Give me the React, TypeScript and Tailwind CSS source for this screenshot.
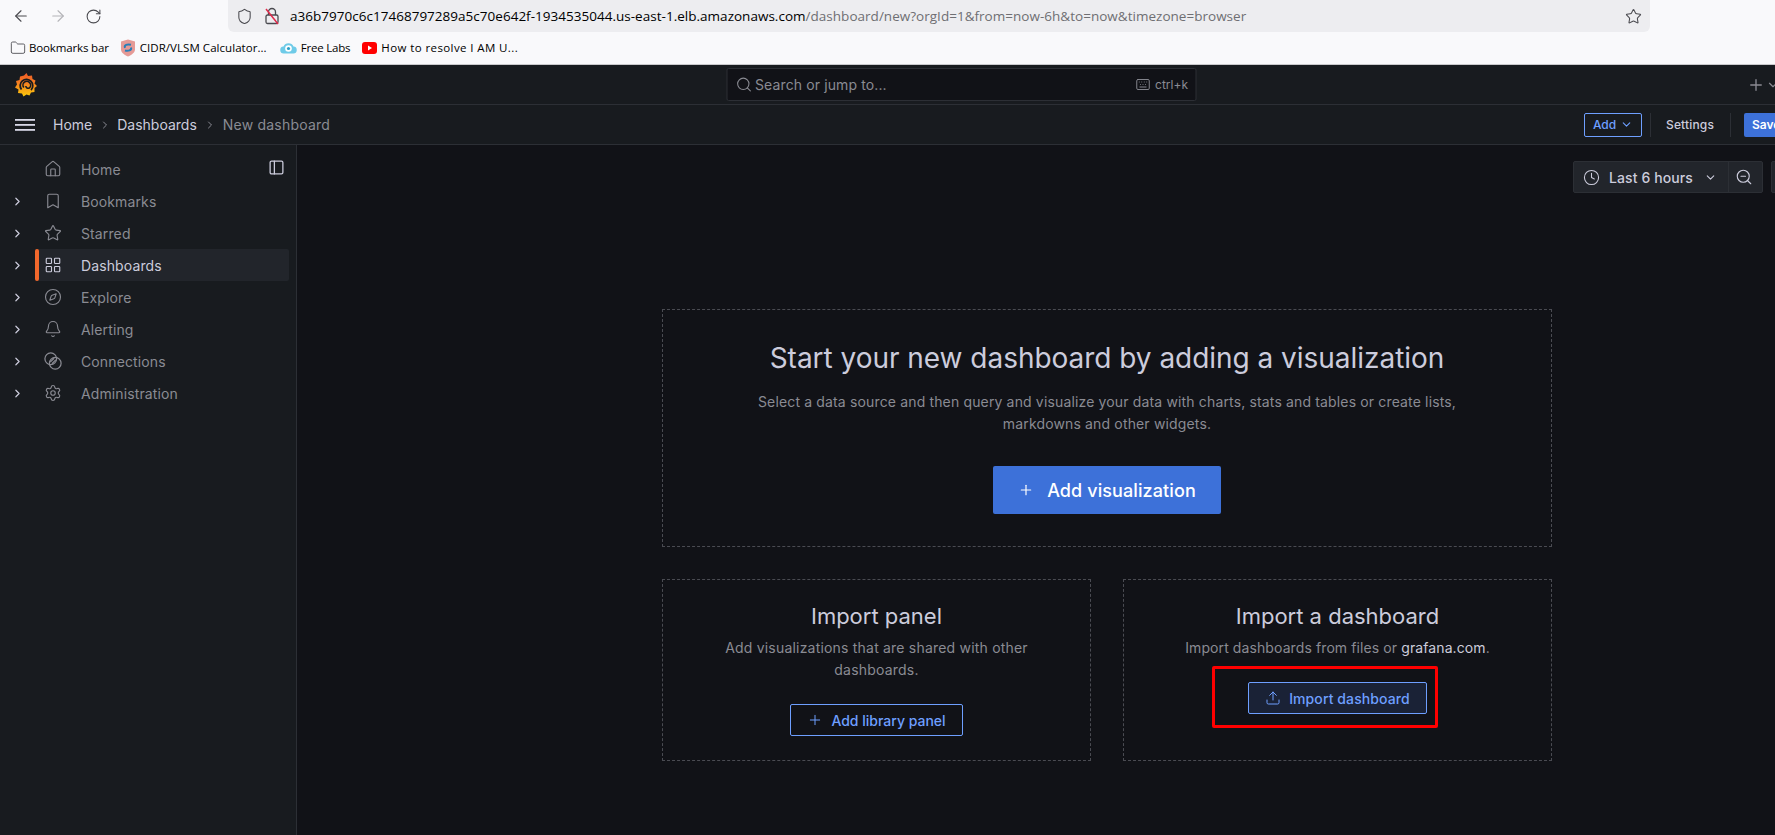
import React from "react";
import { ArrowLeft, ArrowRight, RotateCw, Shield, Star, Folder, Search, Keyboard, Plus, ChevronDown, ChevronRight, Home, Bookmark, LayoutGrid, Compass, Bell, Settings, PanelLeft, Clock, ZoomOut, Upload } from "lucide-react";

function GrafanaLogo() {
  return (
    <svg width="22" height="25" viewBox="0 0 22 25">
      <defs>
        <linearGradient id="g" x1="0" y1="1" x2="0" y2="0">
          <stop offset="0" stopColor="#fbca0a" />
          <stop offset="0.55" stopColor="#f58220" />
          <stop offset="1" stopColor="#ef5a28" />
        </linearGradient>
      </defs>
      <path d="M9 2.500L11.500 0l1.500 3 4-.5.500 3.500 3 1.500-1 3 2.500 2.500-2.500 2 0 4-3.500.5-1.500 3-3-1-3 2-1.500-3-4-.5.500-3.500L0 14.500l2-3-1-3.500 3.500-1 .5-3.500z" fill="url(#g)" />
      <path d="M6.500 16.500A6.300 6.300 0 1 1 16 17" fill="none" stroke="#181b1f" strokeWidth="1.800" />
      <path d="M8.800 14.500a3.800 3.800 0 1 1 5.500.500 2.400 2.400 0 0 1-3.500-2" fill="none" stroke="#181b1f" strokeWidth="1.600" />
    </svg>
  );
}

function LinkIcon(p: { size?: number; strokeWidth?: number; className?: string }) {
  return (
    <svg width={p.size} height={p.size} viewBox="0 0 16 16" fill="none" stroke="currentColor" strokeWidth="1.100" className={p.className}>
      <circle cx="6" cy="6" r="5.200" />
      <circle cx="10" cy="10" r="5.200" />
      <path d="M5.500 9l3.500-3.500M7 10.500l3.500-3.500" />
    </svg>
  );
}

const nav: [string, React.ElementType, boolean, boolean][] = [
  ["Home", Home, false, false],
  ["Bookmarks", Bookmark, true, false],
  ["Starred", Star, true, false],
  ["Dashboards", LayoutGrid, true, true],
  ["Explore", Compass, true, false],
  ["Alerting", Bell, true, false],
  ["Connections", LinkIcon, true, false],
  ["Administration", Settings, true, false],
];

function Divider() {
  return <div className="h-[24px] w-px bg-[#2c2f35]" />;
}

export default function App() {
  return (
    <div className="flex h-[835px] w-[1775px] flex-col overflow-hidden bg-[#111217] font-['Inter',sans-serif] text-[#ccccdc]">
      <header className="flex h-[65px] shrink-0 flex-col border-b border-[#c9c9cc] bg-[#f9f9fb] font-['Open_Sans',sans-serif] text-black">
        <div className="flex h-[32px] items-center">
          <div className="flex w-[228px] items-center pl-[12px]">
            <ArrowLeft size={18} strokeWidth={1.500} className="text-[#4a4a4f]" />
            <ArrowRight size={18} strokeWidth={1.500} className="ml-[19px] text-[#b4b4b8]" />
            <RotateCw size={17} strokeWidth={1.500} className="ml-[18px] text-[#4a4a4f]" />
          </div>
          <div className="flex h-[32px] w-[1422px] items-center rounded-b-md bg-[#ededf0] pl-[8px] pr-[8px] text-[13.500px]">
            <Shield size={17} strokeWidth={1.500} className="text-[#4a4a4f]" />
            <svg width="16" height="18" viewBox="0 0 16 18" fill="none" className="ml-[11px]">
              <rect x="2" y="8" width="12" height="8.500" rx="1.500" stroke="#4a4a4f" strokeWidth="1.300" />
              <path d="M4.500 8V5a3.500 3.500 0 0 1 7 0v3" stroke="#4a4a4f" strokeWidth="1.300" />
              <path d="M2 2l12 15" stroke="#e0294a" strokeWidth="1.500" />
            </svg>
            <span className="ml-[10px] whitespace-nowrap tracking-[0.02px]">
              a36b7970c6c17468797289a5c70e642f-1934535044.us-east-1.elb.amazonaws.com
              <span className="text-[#6f6f73]">/dashboard/new?orgId=1&amp;from=now-6h&amp;to=now&amp;timezone=browser</span>
            </span>
            <Star size={17} strokeWidth={1.500} className="ml-auto text-[#4a4a4f]" />
          </div>
        </div>
        <div className="flex h-[32px] items-center pl-[10px] text-[11.500px]">
          <Folder size={16} strokeWidth={1.400} className="text-[#55555a]" />
          <span className="ml-[3px] tracking-[-0.15px]">Bookmarks bar</span>
          <svg width="16" height="18" viewBox="0 0 16 18" className="ml-[11px]">
            <path d="M1 2.500L8 .5l7 2v8c0 3-3.500 5.500-7 7-3.500-1.500-7-4-7-7z" fill="#e59a96" />
            <path d="M5 8.800C4 6 7 5 11 5.800M11 8.500c1 3-3 3.800-6 3" fill="none" stroke="#2a7fb8" strokeWidth="2" />
          </svg>
          <span className="ml-[4px] tracking-[0.05px]">CIDR/VLSM Calculator...</span>
          <svg width="17" height="12" viewBox="0 0 17 12" className="ml-[13px]">
            <path d="M4 11.500a3.500 3.500 0 0 1-.5-7 5.500 5.500 0 0 1 10 0 3.500 3.500 0 0 1-.5 7z" fill="#6fcbe8" />
            <circle cx="8.500" cy="6.500" r="3.300" fill="#fff" />
            <circle cx="8.500" cy="6.500" r="1.600" fill="#2aa0c8" />
          </svg>
          <span className="ml-[4px] tracking-[-0.2px]">Free Labs</span>
          <svg width="15" height="12" viewBox="0 0 15 12" className="ml-[12px]">
            <rect width="15" height="12" rx="3" fill="#f00" />
            <path d="M6 3.500l4 2.500-4 2.500z" fill="#fff" />
          </svg>
          <span className="ml-[4px] tracking-[0.4px]">How to resolve I AM U...</span>
        </div>
      </header>

      <div className="relative flex h-[40px] shrink-0 items-center justify-center border-b border-[#2c2f35] bg-[#181b1f]">
        <div className="absolute left-[15px] top-[8px]"><GrafanaLogo /></div>
        <div className="flex h-[33px] w-[470px] translate-x-[73.500px] items-center rounded-[2px] border border-[#2c2f35] bg-[#111217] pl-[8px] pr-[7px] text-[14px] text-[#8a8b93]">
          <Search size={17} strokeWidth={1.500} />
          <span className="ml-[3px] tracking-[0.12px]">Search or jump to...</span>
          <Keyboard size={15} strokeWidth={1.500} className="ml-auto" />
          <span className="ml-[5px] text-[12px]">ctrl+k</span>
        </div>
        <Plus size={18} strokeWidth={1.800} className="absolute left-[1747px] top-[11px] text-[#8a8b93]" />
        <ChevronDown size={14} className="absolute left-[1766px] top-[13px] text-[#8a8b93]" />
      </div>

      <div className="flex h-[40px] shrink-0 items-center border-b border-[#2c2f35] bg-[#181b1f] text-[14px]">
        <svg width="20" height="12" viewBox="0 0 20 12" className="ml-[15px] text-[#d8d8e6]" fill="currentColor">
          <rect width="20" height="1.800" />
          <rect y="5" width="20" height="1.800" />
          <rect y="10" width="20" height="1.800" />
        </svg>
        <span className="ml-[18px]">Home</span>
        <ChevronRight size={12} className="ml-[7px] mr-[6px] text-[#8a8b93]" />
        <span>Dashboards</span>
        <ChevronRight size={12} className="ml-[7px] mr-[7px] text-[#8a8b93]" />
        <span className="tracking-[0.2px] text-[#8a8b93]">New dashboard</span>
        <div className="ml-auto flex items-center text-[12px] font-medium">
          <div className="flex h-[24px] w-[58px] items-center justify-center gap-[4px] rounded-[2px] border border-[#6e9fff] text-[#6e9fff]">
            Add <ChevronDown size={13} />
          </div>
          <div className="ml-[8px]"><Divider /></div>
          <span className="ml-[15px] tracking-[0.15px]">Settings</span>
          <div className="ml-[16px]"><Divider /></div>
          <div className="ml-[13px] flex h-[24px] w-[31px] items-center overflow-hidden rounded-l-[2px] bg-[#3d71d9] pl-[8px] font-semibold text-white">Save</div>
        </div>
      </div>

      <div className="flex min-h-0 flex-1">
        <aside className="flex w-[297px] shrink-0 flex-col border-r border-[#2c2f35] bg-[#181b1f] pt-[8px] text-[14px] tracking-[0.12px] text-[#8a8b93]">
          {nav.map(([label, Icon, chevron, active]) => (
            <div key={label} className="relative flex h-[32px] items-center">
              <div className="flex w-[35px] shrink-0 justify-center pr-[1px]">
                {chevron && <ChevronRight size={13} strokeWidth={2.200} className="text-[#ccccdc]" />}
              </div>
              <div className={`flex h-[32px] w-[254px] items-center rounded-[2px] ${active ? "bg-[#22252b] text-[#ccccdc]" : ""}`}>
                <div className={`h-full w-[4px] rounded-[2px] ${active ? "bg-[#f2682c]" : ""}`} />
                <Icon size={18} strokeWidth={1.500} className="ml-[5px]" />
                <span className="ml-[19px]">{label}</span>
              </div>
              {label === "Home" && <PanelLeft size={17} strokeWidth={1.800} className="absolute left-[268px] top-[6px] text-[#ccccdc]" />}
            </div>
          ))}
        </aside>

        <main className="relative flex min-w-0 flex-1 flex-col pl-[365px] pt-[164px]">
          <div className="absolute right-[12px] top-[16px] flex h-[32px] w-[190px] items-center rounded-[2px] border border-[#2c2f35] bg-[#22252b] text-[14px] font-medium">
            <Clock size={17} strokeWidth={1.500} className="ml-[9px]" />
            <span className="ml-[9px] tracking-[0.1px]">Last 6 hours</span>
            <ChevronDown size={13} className="ml-[11px]" />
            <div className="ml-[11px] h-full w-px bg-[#2c2f35]" />
            <ZoomOut size={18} strokeWidth={1.500} className="ml-[6px]" />
          </div>
          <div className="absolute left-[1474px] top-[16px] h-[32px] w-[10px] rounded-l-[2px] border border-[#2c2f35] bg-[#22252b]" />

          <section className="flex h-[238px] w-[890px] flex-col items-center border border-dashed border-[#4a4b52] pt-[26px] text-center">
            <h1 className="text-[28px] leading-[44px] tracking-[-0.03px]">Start your new dashboard by adding a visualization</h1>
            <p className="mt-[11px] w-[740px] text-[14px] leading-[22px] tracking-[0.15px] text-[#8a8b93]">
              Select a data source and then query and visualize your data with charts, stats and tables or create lists,<br />markdowns and other widgets.
            </p>
            <div className="mt-[31px] flex h-[48px] w-[228px] items-center justify-center gap-[13px] rounded-[2px] bg-[#3d71d9] text-[18px] font-medium tracking-[0.1px] text-white">
              <Plus size={16} strokeWidth={1.800} />
              Add visualization
            </div>
          </section>

          <div className="mt-[32px] flex gap-[32px]">
            <section className="flex h-[182px] w-[429px] flex-col items-center border border-dashed border-[#4a4b52] pt-[19px] text-center">
              <h2 className="text-[22px] leading-[34px]">Import panel</h2>
              <p className="mt-[4px] w-[320px] text-[14px] leading-[22px] tracking-[0.2px] text-[#8a8b93]">Add visualizations that are shared with other dashboards.</p>
              <div className="mt-[23px] flex h-[32px] w-[173px] items-center justify-center gap-[8px] rounded-[2px] border border-[#6e9fff] text-[14px] font-medium text-[#6e9fff]">
                <Plus size={16} strokeWidth={1.500} />
                Add library panel
              </div>
            </section>
            <section className="relative flex h-[182px] w-[429px] flex-col items-center border border-dashed border-[#4a4b52] pt-[19px] text-center">
              <h2 className="text-[22px] leading-[34px]">Import a dashboard</h2>
              <p className="mt-[4px] text-[14px] leading-[22px] tracking-[0.1px] text-[#8a8b93]">Import dashboards from files or <span className="text-[#ccccdc]">grafana.com</span>.</p>
              <div className="mt-[23px] flex h-[32px] w-[179px] items-center justify-center gap-[8px] rounded-[2px] border border-[#6e9fff] bg-[#1a2236] text-[14px] font-medium tracking-[0.1px] text-[#6e9fff]">
                <Upload size={16} strokeWidth={1.500} />
                Import dashboard
              </div>
              <div className="absolute left-[88px] top-[86px] h-[62px] w-[226px] rounded-[2px] border-[3px] border-[#ff0000]" />
            </section>
          </div>
        </main>
      </div>
    </div>
  );
}
